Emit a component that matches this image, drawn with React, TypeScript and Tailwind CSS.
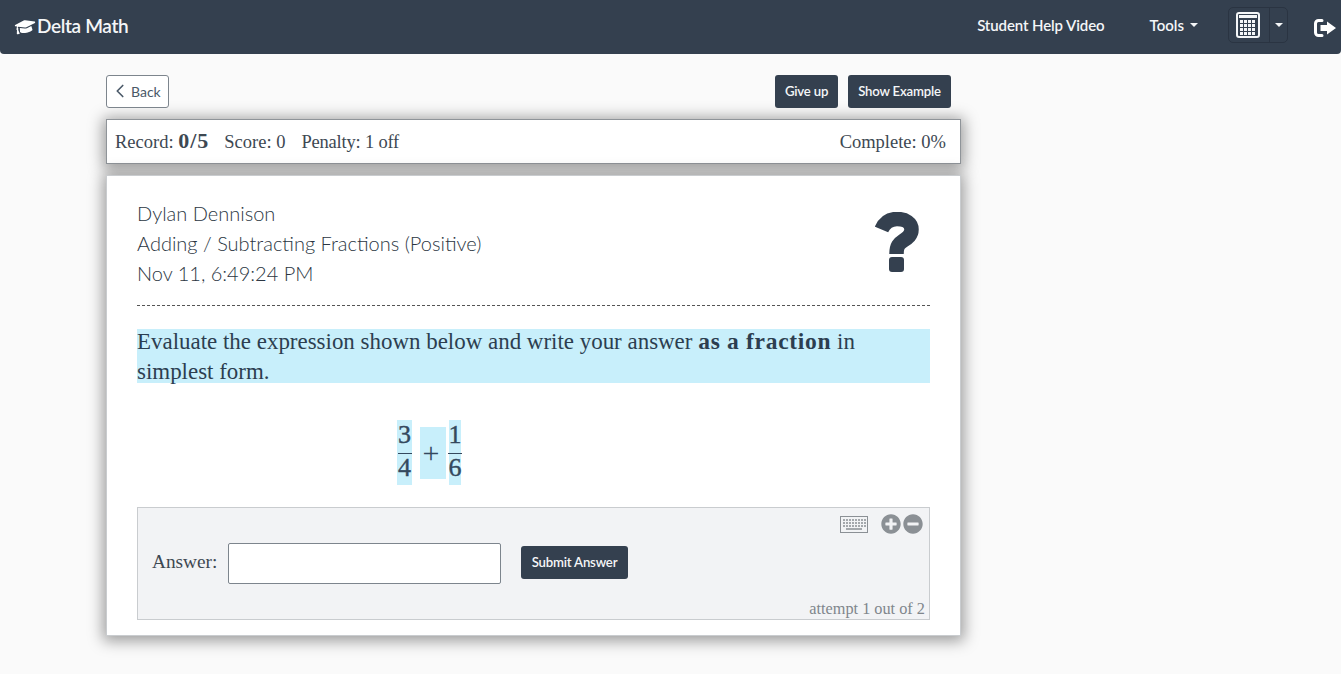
import { ChevronLeft } from 'lucide-react'
import { FaGraduationCap, FaMinusCircle, FaPlusCircle } from 'react-icons/fa'

const serif = "font-['Liberation_Serif',serif]"

const Caret = () => <span className="inline-block border-x-[4px] border-t-[4px] border-x-transparent border-t-current" />

const CalculatorIcon = () => (
  <svg width="24" height="26" viewBox="0 0 24 26" fill="none">
    <rect x="1" y="1" width="22" height="24" rx="2" stroke="#f4f6f8" strokeWidth="2" />
    <rect x="3" y="3" width="18" height="3" fill="#f4f6f8" />
    {[8, 12, 16, 20].map((y) =>
      [4, 8, 12, 16].map((x) => <rect key={`${x}-${y}`} x={x} y={y} width="3" height="3" fill="#f4f6f8" />),
    )}
  </svg>
)

const LogoutIcon = () => (
  <svg width="24" height="20" viewBox="0 0 24 20" fill="none">
    <path d="M9 2.5H5.5A3 3 0 0 0 2.5 5.5v9a3 3 0 0 0 3 3H9" stroke="#fff" strokeWidth="3" strokeLinecap="round" />
    <path d="M14 3.5 23 10l-9 6.5V13H7.5V7H14z" fill="#fff" />
  </svg>
)

const KeyboardIcon = () => (
  <svg width="28" height="17" viewBox="0 0 28 17" fill="none">
    <rect x="0.5" y="0.5" width="27" height="16" stroke="#8b9095" />
    {[3, 6, 9].map((y) =>
      [3, 6, 9, 12, 15, 18, 21, 24].map((x) => <rect key={`${x}-${y}`} x={x} y={y} width="2" height="2" fill="#a4a8ac" />),
    )}
    <rect x="6" y="12" width="16" height="2" fill="#a4a8ac" />
  </svg>
)

const QuestionIcon = () => (
  <svg width="44" height="60" viewBox="0 0 44 60" fill="none">
    <path
      d="M6.5 17.5C9.5 10.5 15 7 22 7C30.5 7 36.5 11 36.5 17.5C36.5 23 33 25.5 28.5 28.5C24 31.5 21.5 33.5 21.5 42"
      stroke="#34404f"
      strokeWidth="14.5"
    />
    <rect x="14" y="45" width="15" height="15" rx="3" fill="#34404f" />
  </svg>
)

const Fraction = ({ top, bottom, width }: { top: string; bottom: string; width: string }) => (
  <span className={`flex ${width} flex-col items-center bg-[#c8effb] text-[26px] [-webkit-text-stroke:0.4px_#34495e]`}>
    <span className="h-[33px] leading-[30px]">{top}</span>
    <span className="h-px w-[14px] shrink-0 bg-[#34495e]" />
    <span className="h-[31px] leading-[28px]">{bottom}</span>
  </span>
)

export default function App() {
  return (
    <div className="h-[674px] overflow-hidden bg-[#fafafa] font-['Lato',sans-serif] text-[#34495e]">
      <nav className="flex h-[54px] items-center rounded-b-[4px] bg-[#34404f] pb-[4px] pl-[15px] text-white">
        <FaGraduationCap className="mr-[1px] mt-[2px] -rotate-[10deg] text-[21px]" />
        <span className="mt-[2px] text-[19px] font-semibold tracking-[-0.35px] text-[#f4f6f8]">Delta Math</span>
        <a className="ml-auto text-[15px] font-semibold tracking-[-0.1px] text-[#f4f6f8]">Student Help Video</a>
        <a className="ml-[45px] flex items-center gap-[6px] text-[15px] font-semibold text-[#f4f6f8]">
          Tools <Caret />
        </a>
        <div className="ml-[30px] flex h-[36px] rounded-[5px] border border-[#2a3442]">
          <span className="flex w-[41px] items-center justify-center border-r border-[#2a3442] pr-[2px]"><CalculatorIcon /></span>
          <span className="flex w-[17px] items-center justify-center text-[#f4f6f8]"><Caret /></span>
        </div>
        <span className="ml-[25px] mt-[6px] flex w-[28px] shrink-0 overflow-hidden"><LogoutIcon /></span>
      </nav>

      <main className="ml-[106px] w-[855px]">
        <div className="flex items-start justify-between pt-[21px] pr-[10px]">
          <button className="flex h-[33px] w-[63px] items-center rounded-[3px] border border-[#7d858d] bg-white pb-[1px] pl-[2px] text-[14px] text-[#4a5968]">
            <ChevronLeft size={22} strokeWidth={1.8} />
            Back
          </button>
          <div className="flex gap-[10px]">
            <button className="h-[33px] w-[63px] rounded-[3px] bg-[#34404f] text-[13.2px] font-semibold tracking-[-0.2px] text-[#f4f6f8]">Give up</button>
            <button className="h-[33px] w-[103px] rounded-[3px] bg-[#34404f] text-[13.2px] font-semibold tracking-[-0.2px] text-[#f4f6f8]">Show Example</button>
          </div>
        </div>

        <div className={`${serif} mt-[11px] flex h-[45px] items-center justify-between border border-[#8f9499] bg-white pl-[8px] pr-[14px] text-[18.5px] leading-[24px] text-[#3d4852] shadow-[0_2px_14px_3px_rgba(0,0,0,0.38)]`}>
          <div className="flex items-baseline">
            <span>Record: <b className="text-[22px] leading-[24px] tracking-[1px]">0/5</b></span>
            <span className="ml-[15px]">Score: 0</span>
            <span className="ml-[16px] tracking-[-0.2px]">Penalty: 1 off</span>
          </div>
          <span>Complete: 0%</span>
        </div>

        <section className="mt-[11px] h-[461px] border border-[#c9cccf] bg-white px-[30px] pt-[22px] shadow-[0_2px_14px_3px_rgba(0,0,0,0.38)]">
          <div className="flex h-[108px] items-start justify-between border-b border-dashed border-[#555]">
            <div className="text-[20px] font-light leading-[30px] text-[#2b3642]">
              <div>Dylan Dennison</div>
              <div>Adding / Subtracting Fractions (Positive)</div>
              <div>Nov 11, 6:49:24 PM</div>
            </div>
            <span className="mr-[11px] mt-[14px] flex"><QuestionIcon /></span>
          </div>

          <div className={`${serif} mt-[23px] h-[54px] bg-[#c8effb] text-[22.95px] leading-[30px] text-[#2c3e50]`}>
            <div className="relative -top-[3px] whitespace-nowrap">
              Evaluate the expression shown below and write your answer <b className="text-[23.5px] tracking-[0.7px]">as a fraction</b> in
            </div>
            <div className="relative -top-[3px]">simplest form.</div>
          </div>

          <div className={`${serif} ml-[260px] mt-[37px] flex h-[65px] items-center text-[#34495e]`}>
            <Fraction top="3" bottom="4" width="w-[15px]" />
            <span className="ml-[8px] flex h-[52px] w-[26px] items-center justify-center bg-[#c8effb] pr-[4px] text-[30px]">+</span>
            <span className="ml-[3px] flex"><Fraction top="1" bottom="6" width="w-[12px]" /></span>
          </div>

          <div className="mt-[22px] flex h-[113px] flex-col border border-[#c9cccf] bg-[#f2f3f5]">
            <div className="flex h-[32px] items-center justify-end gap-[2px] pr-[6px] text-[20px] text-[#8b9095]">
              <span className="mr-[11px] flex"><KeyboardIcon /></span>
              <FaPlusCircle />
              <FaMinusCircle />
            </div>
            <div className={`${serif} mt-[3px] flex items-center pl-[14px] text-[#3d4852]`}>
              <label className="mb-[2px] w-[76px] text-[19.3px]">Answer:</label>
              <span className="h-[41px] w-[273px] rounded-[2px] border border-[#7d858d] bg-white" />
              <button className="mb-[2px] ml-[20px] h-[33px] w-[107px] rounded-[3px] bg-[#34404f] font-['Lato',sans-serif] text-[13.2px] font-semibold tracking-[-0.2px] text-[#f4f6f8]">
                Submit Answer
              </button>
            </div>
            <div className={`${serif} mt-auto pr-[4px] text-right text-[16.3px] leading-[20px] text-[#80868c]`}>attempt 1 out of 2</div>
          </div>
        </section>
      </main>
    </div>
  )
}
